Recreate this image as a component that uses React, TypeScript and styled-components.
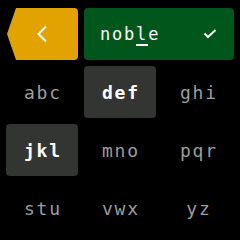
import styled, { createGlobalStyle } from "styled-components";

const KEYS = ["abc", "def", "ghi", "jkl", "mno", "pqr", "stu", "vwx", "yz"];
const ACTIVE = ["def", "jkl"];

const Global = createGlobalStyle`
  html, body {
    margin: 0;
    padding: 0;
    background: #000;
  }
`;

const Screen = styled.div`
  width: 240px;
  height: 240px;
  box-sizing: border-box;
  padding: 8px 6px 6px;
  display: grid;
  grid-template-columns: repeat(3, 72px);
  grid-auto-rows: 52px;
  gap: 6px;
  background: #000;
  font-family: "DejaVu Sans Mono", monospace;
`;

const Back = styled.button`
  border: 0;
  padding: 0;
  margin: 0;
  background: #e2a200;
  border-radius: 4px;
  clip-path: polygon(10px 0, 100% 0, 100% 100%, 10px 100%, 1px 50%);
  display: flex;
  align-items: center;
  justify-content: center;
  padding-left: 2px;
`;

const Field = styled.div`
  grid-column: span 2;
  background: #00561b;
  border-radius: 4px;
  display: flex;
  align-items: center;
  justify-content: space-between;
  padding: 0 17px 0 16px;
  color: #fff;
  font-size: 17px;
  letter-spacing: 1.8px;
`;

const Cursor = styled.span`
  border-bottom: 2px solid #fff;
  padding-bottom: 0;
`;

const Key = styled.div<{ $active: boolean }>`
  border-radius: 4px;
  background: ${(p) => (p.$active ? "#333532" : "transparent")};
  color: ${(p) => (p.$active ? "#fff" : "#9d9d9d")};
  font-weight: ${(p) => (p.$active ? 700 : 400)};
  font-size: 18px;
  letter-spacing: 1.8px;
  padding-left: 1.8px;
  display: flex;
  align-items: center;
  justify-content: center;
`;

export default function App() {
  return (
    <>
      <Global />
      <Screen>
        <Back>
          <svg width="12" height="18" viewBox="0 0 12 18">
            <path d="M9 1.5 L1.5 9 L9 16.5" fill="none" stroke="#fff" strokeWidth="2" />
          </svg>
        </Back>
        <Field>
          <span>
            nob<Cursor>l</Cursor>e
          </span>
          <svg width="14" height="10" viewBox="0 0 14 10">
            <path d="M1.5 4.5 L5 8 L12.5 1" fill="none" stroke="#fff" strokeWidth="2" />
          </svg>
        </Field>
        {KEYS.map((k) => (
          <Key key={k} $active={ACTIVE.includes(k)}>
            {k}
          </Key>
        ))}
      </Screen>
    </>
  );
}
